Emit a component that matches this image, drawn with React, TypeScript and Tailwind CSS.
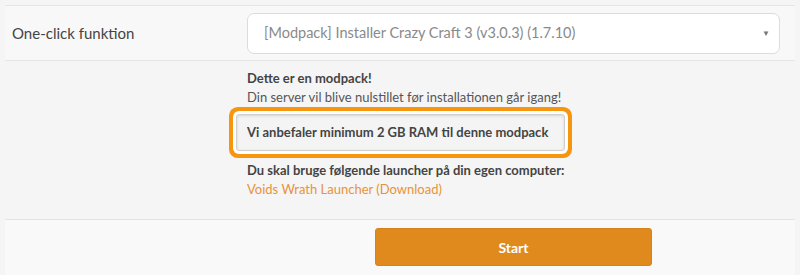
import React from 'react';

const App: React.FC = () => {
  return (
    <div className="min-h-screen bg-[#f5f5f5] px-[5px] pt-[5px] text-[14px] text-[#555] font-['Lato','Open_Sans',sans-serif]">
      {/* One-click row */}
      <div className="flex items-center h-[56px] bg-[#f8f8f8] border-t border-b border-[#e5e5e5]">
        <div className="w-[242px] pl-[7px] text-[15px] text-[#444]">One-click funktion</div>
        <div className="w-[533px] h-[41px] bg-white border border-[#dcdcdc] rounded-[7px] flex items-center justify-between pl-[16px] pr-[9px]">
          <span className="text-[14.5px] text-[#8a8a8a]">[Modpack] Installer Crazy Craft 3 (v3.0.3) (1.7.10)</span>
          <span className="text-[8px] text-[#777]">▼</span>
        </div>
      </div>

      {/* Modpack info */}
      <div className="flex h-[159px] border-b border-[#e3e3e3]">
        <div className="w-[242px]" />
        <div className="pt-[8px] text-[13px] leading-[19px]">
          <div className="font-bold text-[#444]">Dette er en modpack!</div>
          <div className="text-[#555]">Din server vil blive nulstillet før installationen går igang!</div>
          <div className="mt-[7px] -ml-[11px] w-[329px] h-[37px] border border-[#cfcfcf] rounded-[3px] bg-[#f4f4f4] shadow-[inset_0_1px_3px_rgba(0,0,0,0.12),0_0_0_3px_#fff,0_0_0_7px_#f7950f] flex items-center pl-[10px] font-bold text-[#444]">
            Vi anbefaler minimum 2 GB RAM til denne modpack
          </div>
          <div className="mt-[10px] font-bold text-[#444]">Du skal bruge følgende launcher på din egen computer:</div>
          <a href="#" className="text-[#e8923a]">Voids Wrath Launcher (Download)</a>
        </div>
      </div>

      {/* Start */}
      <div className="flex h-[56px] bg-[#f9f9f9] pt-[8px]">
        <div className="w-[370px]" />
        <button className="w-[277px] h-[38px] bg-[#e08a1e] border border-[#d8821a] rounded-[3px] text-white text-[14px] font-bold">
          Start
        </button>
      </div>
    </div>
  );
};

export default App;
